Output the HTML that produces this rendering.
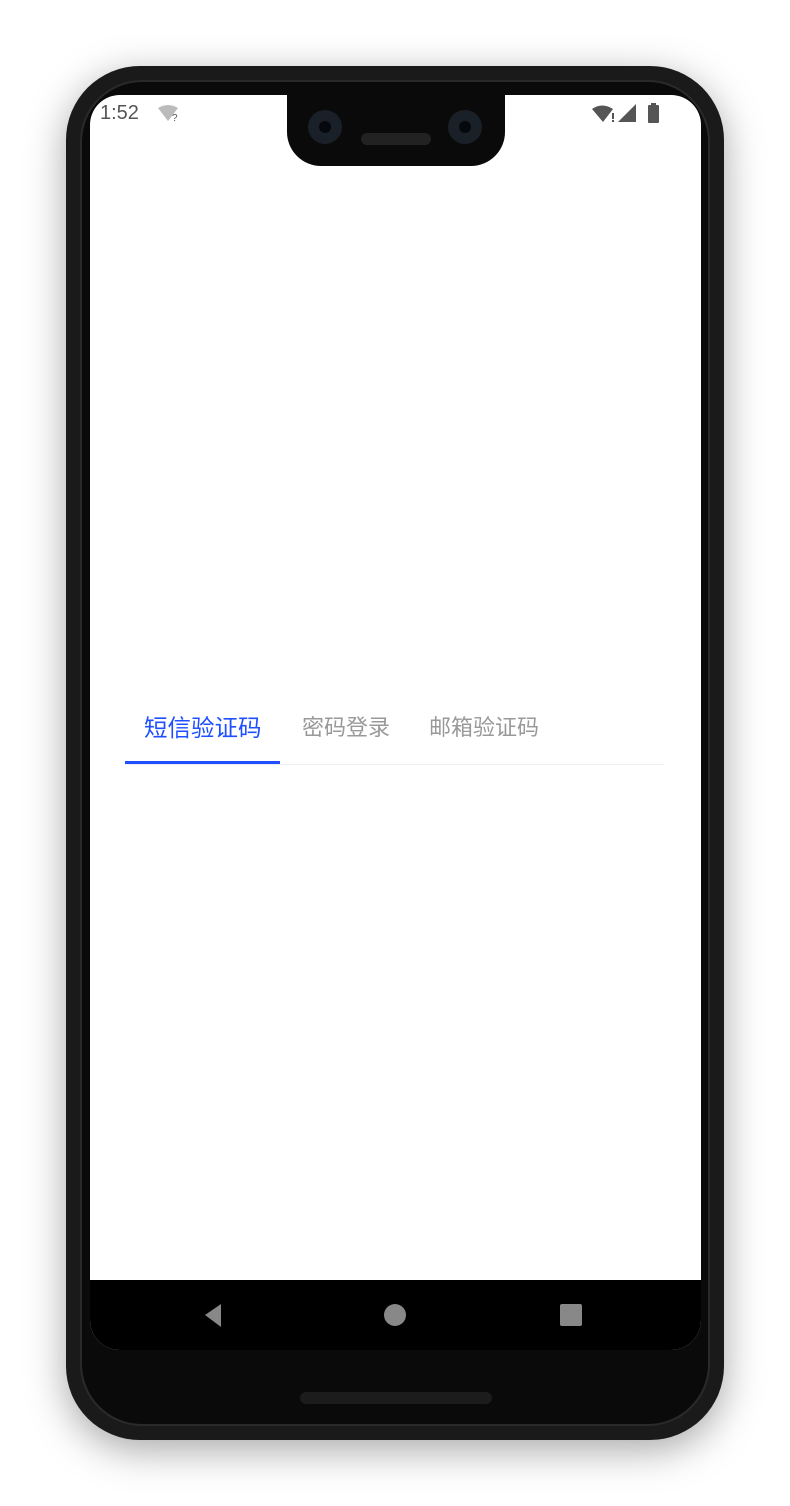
<!DOCTYPE html>
<html><head><meta charset="utf-8"><style>
body{margin:0;width:790px;height:1506px;background:#fff;position:relative;overflow:hidden;font-family:"Liberation Sans","Noto Sans CJK SC",sans-serif}
.phone{position:absolute;left:66px;top:66px;width:658px;height:1374px;border-radius:74px;background:#1a1a1a;box-shadow:0 10px 40px rgba(0,0,0,.35)}
.ring{position:absolute;left:80px;top:80px;width:630px;height:1346px;border-radius:62px;background:#0a0a0a;border:2px solid #2a2a2a;box-sizing:border-box}
.screen{position:absolute;left:90px;top:95px;width:611px;height:1255px;border-radius:30px;background:#fff;overflow:hidden}
.nav{position:absolute;left:0;top:1185px;width:611px;height:70px;background:#000}
.notch{position:absolute;left:287px;top:90px;width:218px;height:76px;background:#0a0a0a;border-radius:0 0 34px 34px}
.cam{position:absolute;width:34px;height:34px;border-radius:50%;background:#1a2028;top:110px}
.cam::after{content:"";position:absolute;left:11px;top:11px;width:12px;height:12px;border-radius:50%;background:#05080c}
.spk{position:absolute;left:361px;top:133px;width:70px;height:12px;border-radius:6px;background:#222}
.tab{position:absolute;top:710px;font-size:22px;color:#999}
</style></head><body>
<div class="phone"></div>
<div class="ring"></div>
<div class="screen">
 <div style="position:absolute;left:10px;top:7px;font-size:20px;color:#555">1:52</div>
 <svg style="position:absolute;left:68px;top:10px" width="24" height="18"><path d="M0 3 Q10 -3 20 3 L10 16 Z" fill="#bbb"/><text x="14" y="16" font-size="10" fill="#555" font-family="Liberation Sans">?</text></svg>
 <svg style="position:absolute;left:502px;top:8px" width="70" height="22"><path d="M0 6 Q10 -1 21 6 L11 19 Z" fill="#555"/><rect x="20" y="10" width="2" height="6" fill="#555"/><rect x="20" y="17" width="2" height="2" fill="#555"/><path d="M26 19 L44 1 L44 19 Z" fill="#555"/><rect x="56" y="2" width="11" height="18" rx="1" fill="#555"/><rect x="59" y="0" width="5" height="3" fill="#555"/></svg>
 <div class="nav">
  <svg style="position:absolute;left:114px;top:23px" width="24" height="25"><path d="M1 12 L17 1 L17 24 Z" fill="#888"/></svg>
  <div style="position:absolute;left:294px;top:24px;width:22px;height:22px;border-radius:50%;background:#888"></div>
  <div style="position:absolute;left:470px;top:24px;width:22px;height:22px;border-radius:2px;background:#888"></div>
 </div>
 </div>
<div class="notch"></div>
<div class="cam" style="left:308px"></div>
<div class="cam" style="left:448px"></div>
<div class="spk"></div>
<div style="position:absolute;left:300px;top:1392px;width:192px;height:12px;border-radius:6px;background:#1c1c1c"></div>
<div class="tab" style="left:144px;top:709px;font-size:23.5px;color:#1f4fff">短信验证码</div>
<div class="tab" style="left:302px">密码登录</div>
<div class="tab" style="left:429px">邮箱验证码</div>
<div style="position:absolute;left:125px;top:764px;width:539px;height:1px;background:#eee"></div>
<div style="position:absolute;left:125px;top:761px;width:155px;height:3px;background:#1f4fff"></div>
</body></html>
